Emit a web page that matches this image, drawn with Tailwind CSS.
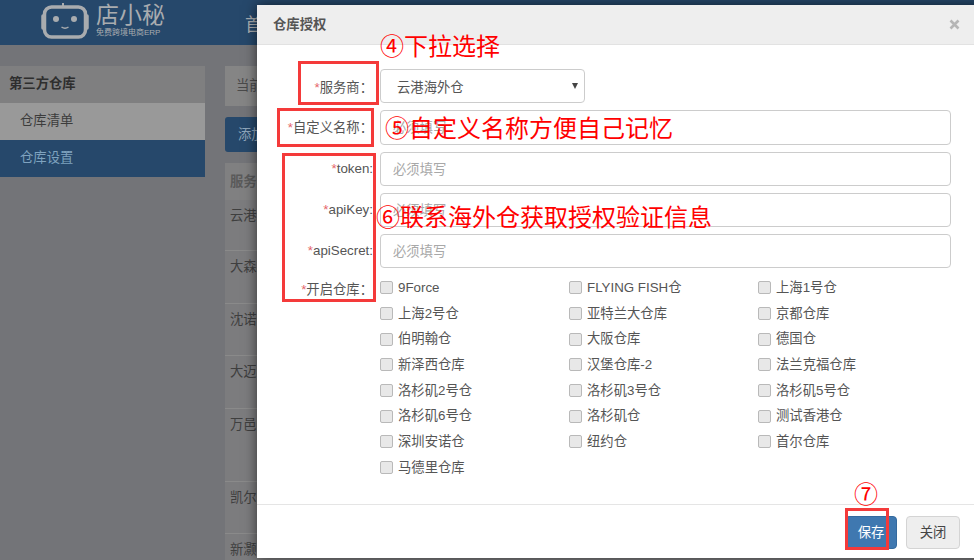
<!DOCTYPE html>
<html lang="zh-CN">
<head>
<meta charset="utf-8">
<title>仓库授权</title>
<script src="https://cdn.jsdelivr.net/npm/@tailwindcss/browser@4"></script>
</head>
<body class="m-0 bg-[#737478]">
<div class="relative w-[974px] h-[560px] overflow-hidden bg-[#737478] font-['Liberation_Sans','Noto_Sans_CJK_SC',sans-serif] text-[13.33px] text-[#3c3c3c]">

  <!-- page behind the dialog -->
  <header class="h-[45px] bg-[#26486b] flex items-center">
    <div class="ml-[40px] w-[205px] flex items-center gap-[6px] text-[#a9acaf] shrink-0">
      <svg class="w-[50px] h-[37px] -mt-[4px]" viewBox="0 0 50 37" fill="none">
        <path d="M23 5V1" stroke="#a9acaf" stroke-width="2"/>
        <rect x="4.5" y="5" width="41" height="30" rx="7" stroke="#a9acaf" stroke-width="3.5"/>
        <path d="M3 14v12M47 14v12" stroke="#a9acaf" stroke-width="3.5" stroke-linecap="round"/>
        <circle cx="16" cy="17" r="3" fill="#a9acaf"/>
        <circle cx="34" cy="17" r="3" fill="#a9acaf"/>
        <path d="M21.5 25q3.500 2.500 7 0" stroke="#a9acaf" stroke-width="1.500"/>
      </svg>
      <div class="flex flex-col -mt-[5px]">
        <span class="text-[23px] leading-[25px]">店小秘</span>
        <span class="text-[8px] leading-[10px]">免费跨境电商ERP</span>
      </div>
    </div>
    <span class="text-[18px] text-[#a9acaf] whitespace-nowrap mt-[6px]">首</span>
  </header>

  <div class="flex gap-[20px] pt-[21px]">
    <aside class="w-[205px] shrink-0">
      <div class="h-[37px] bg-[#7f7f80] flex items-center pl-[9px] pb-[2px] font-bold text-[#2e2e2e]">第三方仓库</div>
      <div class="h-[37px] bg-[#999999] flex items-center pl-[20px] pb-[2px]">仓库清单</div>
      <div class="h-[37px] bg-[#26486b] flex items-center pl-[20px] pb-[2px] text-[#7fa3bf]">仓库设置</div>
    </aside>
    <main class="flex-1 min-w-0">
      <div class="h-[40px] bg-[#858585] flex items-center pl-[11px] text-[#4a4a4a]">当前位置</div>
      <div class="h-[35px] w-[80px] mt-[11px] bg-[#26486b] rounded-[3px] flex items-center pl-[13px] text-[#8fa6bb]">添加仓库</div>
      <div class="mt-[11px] bg-[#7c7c7e] text-[#3f3f3f]">
        <div class="h-[37px] bg-[#808081] flex items-center pl-[5px] font-bold text-[#5a5a5a]">服务商</div>
        <div class="h-[51px] pt-[6px] pl-[5px] border-b border-[#8a8a8a]">云港海外仓</div>
        <div class="h-[53px] pt-[6px] pl-[5px] border-b border-[#8a8a8a]">大森林仓</div>
        <div class="h-[52px] pt-[6px] pl-[5px] border-b border-[#8a8a8a]">沈诺仓</div>
        <div class="h-[53px] pt-[6px] pl-[5px] border-b border-[#8a8a8a]">大迈仓</div>
        <div class="h-[73px] pt-[6px] pl-[5px] border-b border-[#8a8a8a]">万邑通</div>
        <div class="h-[52px] pt-[6px] pl-[5px] border-b border-[#8a8a8a]">凯尔仓</div>
        <div class="h-[52px] pt-[6px] pl-[5px]">新灏仓</div>
      </div>
    </main>
  </div>

  <!-- dialog -->
  <section class="absolute left-[257px] top-[5px] w-[740px] h-[553px] bg-white shadow-[0_0_12px_rgba(0,0,0,0.6)] flex flex-col text-[#555555]">
    <div class="h-[40px] shrink-0 bg-[#eeeeee] border-b border-[#e2e2e2] flex items-center justify-between pl-[16px] pr-[37px]">
      <span class="text-[#555555] font-bold">仓库授权</span>
      <svg class="w-[11px] h-[11px]" viewBox="0 0 11 11"><path d="M1.500 1.500l8 8M9.500 1.500l-8 8" stroke="#b5b5b5" stroke-width="2.600"/></svg>
    </div>

    <form class="flex-1 flex flex-col pt-[24px] gap-[7px]">
      <div class="flex items-center h-[34px]">
        <label class="w-[116px] shrink-0 text-right whitespace-nowrap pt-[3px]"><span class="text-[#e5646a]">*</span>服务商：</label>
        <div class="relative ml-[7px] w-[205px] h-full border border-[#cccccc] rounded-[4px] flex items-center pl-[16px] pt-[3px] text-[#555555]">
          云港海外仓
          <span class="absolute right-[6px] top-[13px] w-0 h-0 border-x-[3.500px] border-x-transparent border-t-[6px] border-t-[#444444]"></span>
        </div>
      </div>
      <div class="flex items-center h-[35px]">
        <label class="w-[116px] shrink-0 text-right whitespace-nowrap"><span class="text-[#e5646a]">*</span>自定义名称：</label>
        <input class="ml-[7px] w-[571px] h-full border border-[#cccccc] rounded-[4px] px-[12px] text-[13.33px] placeholder:text-[#a8a8a8]" placeholder="必须填写">
      </div>
      <div class="flex items-center h-[34px]">
        <label class="w-[116px] shrink-0 text-right whitespace-nowrap"><span class="text-[#e5646a]">*</span>token:</label>
        <input class="ml-[7px] w-[571px] h-full border border-[#cccccc] rounded-[4px] px-[12px] text-[13.33px] placeholder:text-[#a8a8a8]" placeholder="必须填写">
      </div>
      <div class="flex items-center h-[34px]">
        <label class="w-[116px] shrink-0 text-right whitespace-nowrap"><span class="text-[#e5646a]">*</span>apiKey:</label>
        <input class="ml-[7px] w-[571px] h-full border border-[#cccccc] rounded-[4px] px-[12px] text-[13.33px] placeholder:text-[#a8a8a8]" placeholder="必须填写">
      </div>
      <div class="flex items-center h-[34px]">
        <label class="w-[116px] shrink-0 text-right whitespace-nowrap"><span class="text-[#e5646a]">*</span>apiSecret:</label>
        <input class="ml-[7px] w-[571px] h-full border border-[#cccccc] rounded-[4px] px-[12px] text-[13.33px] placeholder:text-[#a8a8a8]" placeholder="必须填写">
      </div>
      <div class="flex">
        <label class="w-[116px] shrink-0 text-right whitespace-nowrap leading-[25.700px] pt-[2px]"><span class="text-[#e5646a]">*</span>开启仓库：</label>
        <div class="ml-[7px] w-[567px] grid grid-cols-3 auto-rows-[25.700px] items-center">
          <label class="flex items-center gap-[5px]"><input type="checkbox" class="appearance-none w-[13px] h-[13px] rounded-[2px] bg-[#e8e8e8] border border-[#b9b9b9]">9Force</label>
          <label class="flex items-center gap-[5px]"><input type="checkbox" class="appearance-none w-[13px] h-[13px] rounded-[2px] bg-[#e8e8e8] border border-[#b9b9b9]">FLYING FISH仓</label>
          <label class="flex items-center gap-[5px]"><input type="checkbox" class="appearance-none w-[13px] h-[13px] rounded-[2px] bg-[#e8e8e8] border border-[#b9b9b9]">上海1号仓</label>
          <label class="flex items-center gap-[5px]"><input type="checkbox" class="appearance-none w-[13px] h-[13px] rounded-[2px] bg-[#e8e8e8] border border-[#b9b9b9]">上海2号仓</label>
          <label class="flex items-center gap-[5px]"><input type="checkbox" class="appearance-none w-[13px] h-[13px] rounded-[2px] bg-[#e8e8e8] border border-[#b9b9b9]">亚特兰大仓库</label>
          <label class="flex items-center gap-[5px]"><input type="checkbox" class="appearance-none w-[13px] h-[13px] rounded-[2px] bg-[#e8e8e8] border border-[#b9b9b9]">京都仓库</label>
          <label class="flex items-center gap-[5px]"><input type="checkbox" class="appearance-none w-[13px] h-[13px] rounded-[2px] bg-[#e8e8e8] border border-[#b9b9b9]">伯明翰仓</label>
          <label class="flex items-center gap-[5px]"><input type="checkbox" class="appearance-none w-[13px] h-[13px] rounded-[2px] bg-[#e8e8e8] border border-[#b9b9b9]">大阪仓库</label>
          <label class="flex items-center gap-[5px]"><input type="checkbox" class="appearance-none w-[13px] h-[13px] rounded-[2px] bg-[#e8e8e8] border border-[#b9b9b9]">德国仓</label>
          <label class="flex items-center gap-[5px]"><input type="checkbox" class="appearance-none w-[13px] h-[13px] rounded-[2px] bg-[#e8e8e8] border border-[#b9b9b9]">新泽西仓库</label>
          <label class="flex items-center gap-[5px]"><input type="checkbox" class="appearance-none w-[13px] h-[13px] rounded-[2px] bg-[#e8e8e8] border border-[#b9b9b9]">汉堡仓库-2</label>
          <label class="flex items-center gap-[5px]"><input type="checkbox" class="appearance-none w-[13px] h-[13px] rounded-[2px] bg-[#e8e8e8] border border-[#b9b9b9]">法兰克福仓库</label>
          <label class="flex items-center gap-[5px]"><input type="checkbox" class="appearance-none w-[13px] h-[13px] rounded-[2px] bg-[#e8e8e8] border border-[#b9b9b9]">洛杉矶2号仓</label>
          <label class="flex items-center gap-[5px]"><input type="checkbox" class="appearance-none w-[13px] h-[13px] rounded-[2px] bg-[#e8e8e8] border border-[#b9b9b9]">洛杉矶3号仓</label>
          <label class="flex items-center gap-[5px]"><input type="checkbox" class="appearance-none w-[13px] h-[13px] rounded-[2px] bg-[#e8e8e8] border border-[#b9b9b9]">洛杉矶5号仓</label>
          <label class="flex items-center gap-[5px]"><input type="checkbox" class="appearance-none w-[13px] h-[13px] rounded-[2px] bg-[#e8e8e8] border border-[#b9b9b9]">洛杉矶6号仓</label>
          <label class="flex items-center gap-[5px]"><input type="checkbox" class="appearance-none w-[13px] h-[13px] rounded-[2px] bg-[#e8e8e8] border border-[#b9b9b9]">洛杉矶仓</label>
          <label class="flex items-center gap-[5px]"><input type="checkbox" class="appearance-none w-[13px] h-[13px] rounded-[2px] bg-[#e8e8e8] border border-[#b9b9b9]">测试香港仓</label>
          <label class="flex items-center gap-[5px]"><input type="checkbox" class="appearance-none w-[13px] h-[13px] rounded-[2px] bg-[#e8e8e8] border border-[#b9b9b9]">深圳安诺仓</label>
          <label class="flex items-center gap-[5px]"><input type="checkbox" class="appearance-none w-[13px] h-[13px] rounded-[2px] bg-[#e8e8e8] border border-[#b9b9b9]">纽约仓</label>
          <label class="flex items-center gap-[5px]"><input type="checkbox" class="appearance-none w-[13px] h-[13px] rounded-[2px] bg-[#e8e8e8] border border-[#b9b9b9]">首尔仓库</label>
          <label class="flex items-center gap-[5px]"><input type="checkbox" class="appearance-none w-[13px] h-[13px] rounded-[2px] bg-[#e8e8e8] border border-[#b9b9b9]">马德里仓库</label>
        </div>
      </div>
    </form>

    <footer class="h-[54px] shrink-0 border-t border-[#e5e5e5] flex justify-start items-start pt-[11px] pl-[588px] gap-[9px]">
      <button type="button" class="w-[52px] h-[33px] rounded-[4px] bg-[#3f78b0] border border-[#356a9e] text-white text-[13.33px]">保存</button>
      <button type="button" class="w-[54px] h-[33px] rounded-[4px] bg-[#eeeeee] border border-[#d4d4d4] text-[#444444] text-[13.33px]">关闭</button>
    </footer>
  </section>

  <!-- red annotations drawn over the screenshot -->
  <div class="absolute left-[298px] top-[61px] w-[81px] h-[44px] border-[3px] border-[#f43a3a]"></div>
  <div class="absolute left-[277px] top-[108px] w-[97px] h-[39px] border-[3px] border-[#f43a3a]"></div>
  <div class="absolute left-[282px] top-[153px] w-[94px] h-[149px] border-[3px] border-[#f43a3a]"></div>
  <div class="absolute left-[845px] top-[508px] w-[44px] h-[42px] border-[3px] border-[#f43a3a]"></div>
  <span class="absolute left-[380px] top-[30px] text-[24px] leading-[34px] text-[#ff0000] whitespace-nowrap">④下拉选择</span>
  <span class="absolute left-[385px] top-[112px] text-[24px] leading-[34px] text-[#ff0000] whitespace-nowrap">⑤自定义名称方便自己记忆</span>
  <span class="absolute left-[376px] top-[201px] text-[24px] leading-[34px] text-[#ff0000] whitespace-nowrap">⑥联系海外仓获取授权验证信息</span>
  <span class="absolute left-[854px] top-[478px] text-[24px] leading-[34px] text-[#ff0000] whitespace-nowrap">⑦</span>
</div>
</body>
</html>
